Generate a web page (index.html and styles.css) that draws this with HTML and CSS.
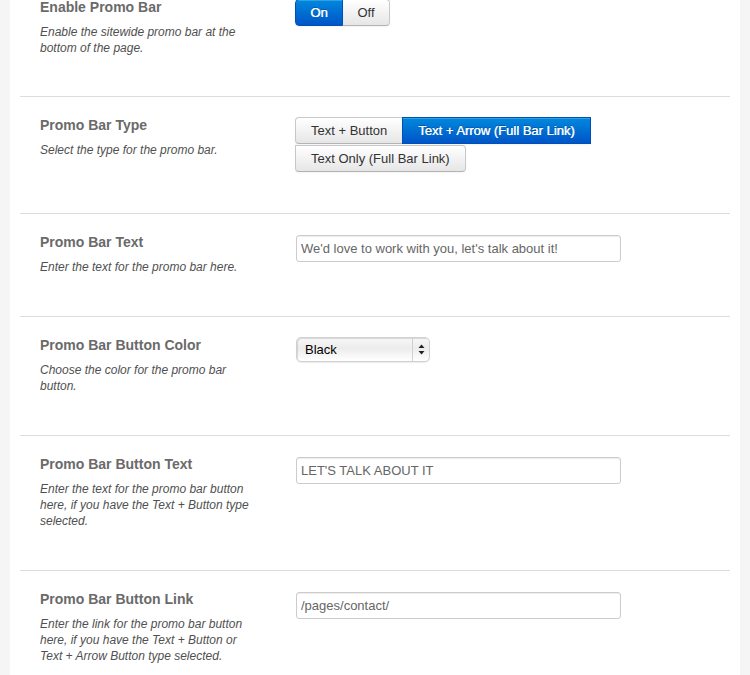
FILE: index.html
```html
<!DOCTYPE html>
<html>
<head>
<meta charset="utf-8">
<link rel="stylesheet" href="styles.css">
</head>
<body>
<div class="panel">
  <div class="row row-first">
    <div class="label-col">
      <h3 class="title">Enable Promo Bar</h3>
      <p class="desc">Enable the sitewide promo bar at the bottom of the page.</p>
    </div>
    <div class="control-col">
      <div class="btn-group">
        <span class="btn btn-toggle btn-primary btn-first">On</span><span class="btn btn-toggle btn-last">Off</span>
      </div>
    </div>
  </div>

  <div class="row">
    <div class="label-col">
      <h3 class="title">Promo Bar Type</h3>
      <p class="desc">Select the type for the promo bar.</p>
    </div>
    <div class="control-col">
      <div class="btn-group">
        <span class="btn btn-wide btn-first">Text + Button</span><span class="btn btn-wide btn-primary">Text + Arrow (Full Bar Link)</span><span class="btn btn-wide btn-last btn-alone">Text Only (Full Bar Link)</span>
      </div>
    </div>
  </div>

  <div class="row">
    <div class="label-col">
      <h3 class="title">Promo Bar Text</h3>
      <p class="desc">Enter the text for the promo bar here.</p>
    </div>
    <div class="control-col">
      <input class="text-input" type="text" value="We'd love to work with you, let's talk about it!">
    </div>
  </div>

  <div class="row">
    <div class="label-col">
      <h3 class="title">Promo Bar Button Color</h3>
      <p class="desc">Choose the color for the promo bar button.</p>
    </div>
    <div class="control-col">
      <div class="select">
        <span class="select-value">Black</span>
        <span class="select-arrows">
          <svg width="7" height="11" viewBox="0 0 7 11"><path d="M3.5 0.5 L6.5 4 L0.5 4 Z" fill="#222"/><path d="M3.5 10.5 L6.5 7 L0.5 7 Z" fill="#222"/></svg>
        </span>
      </div>
    </div>
  </div>

  <div class="row">
    <div class="label-col">
      <h3 class="title">Promo Bar Button Text</h3>
      <p class="desc">Enter the text for the promo bar button here, if you have the Text + Button type selected.</p>
    </div>
    <div class="control-col">
      <input class="text-input" type="text" value="LET'S TALK ABOUT IT">
    </div>
  </div>

  <div class="row">
    <div class="label-col">
      <h3 class="title">Promo Bar Button Link</h3>
      <p class="desc">Enter the link for the promo bar button here, if you have the Text + Button or Text + Arrow Button type selected.</p>
    </div>
    <div class="control-col">
      <input class="text-input" type="text" value="/pages/contact/">
    </div>
  </div>
</div>
</body>
</html>
```

FILE: styles.css
```css
html, body {
  margin: 0;
  padding: 0;
  background: #f5f5f5;
  font-family: "Liberation Sans", Arial, Helvetica, sans-serif;
  overflow: hidden;
}

.panel {
  margin: 0 10px;
  padding: 0 10px;
  background: #ffffff;
  min-height: 100vh;
}

.row {
  display: flex;
  padding: 19px 0 41px 20px;
  border-bottom: 1px solid #dddddd;
}

.row-first {
  margin-top: -21px;
  padding-bottom: 40px;
}

.label-col {
  width: 255px;
  flex: none;
}

.title {
  margin: 0 0 8px 0;
  font-size: 14px;
  line-height: 18px;
  font-weight: bold;
  color: #6a6a6a;
}

.desc {
  margin: 0;
  width: 215px;
  font-size: 12px;
  line-height: 16px;
  font-style: italic;
  color: #505050;
}

.control-col {
  width: 326px;
  flex: none;
  padding-top: 1px;
}

.btn-group {
  display: flex;
  flex-wrap: wrap;
}

.btn {
  display: block;
  padding: 4px 14px;
  font-size: 13px;
  line-height: 17px;
  color: #333333;
  background: linear-gradient(to bottom, #ffffff, #e6e6e6);
  border: 1px solid #c8c8c8;
  border-bottom-color: #b3b3b3;
  box-shadow: inset 0 1px 0 rgba(255,255,255,0.2), 0 1px 2px rgba(0,0,0,0.05);
  margin-left: -1px;
  white-space: nowrap;
}

.btn-wide {
  padding: 4px 15px;
}

.btn-toggle {
  box-sizing: border-box;
  width: 48px;
  padding: 4px 0;
  text-align: center;
}

.btn-first {
  margin-left: 0;
  border-radius: 4px 0 0 4px;
}

.btn-last {
  border-radius: 0 4px 4px 0;
}

.btn-alone {
  margin-left: 0;
  margin-top: 1px;
  border-radius: 0 4px 4px 4px;
}

.btn-primary {
  color: #ffffff;
  text-shadow: 0 -1px 0 rgba(0,0,0,0.25), 0.3px 0 0 #ffffff;
  background: linear-gradient(to bottom, #0088dd, #0055c8);
  border-color: #0050b8;
  position: relative;
}

.text-input {
  display: block;
  box-sizing: border-box;
  width: 325px;
  height: 27px;
  margin: 1px 0 0 1px;
  padding: 4px 4px;
  font-family: "Liberation Sans", Arial, Helvetica, sans-serif;
  font-size: 13px;
  line-height: 17px;
  color: #666666;
  background: #ffffff;
  border: 1px solid #cccccc;
  border-radius: 3px;
  box-shadow: inset 0 1px 1px rgba(0,0,0,0.075);
  outline: none;
}

.select {
  display: flex;
  box-sizing: border-box;
  width: 134px;
  height: 25px;
  margin-left: 1px;
  border: 1px solid #d0d0d0;
  border-radius: 5px;
  background: linear-gradient(to bottom, #f8f8f8 0%, #ececec 45%, #ffffff 100%);
  box-shadow: inset 1px 1px 1px rgba(0,0,0,0.12), 0 1px 1px rgba(0,0,0,0.08);
}

.select-value {
  flex: 1;
  padding-left: 8px;
  font-size: 13px;
  line-height: 23px;
  color: #000000;
}

.select-arrows {
  width: 16px;
  border-left: 1px solid #d0d0d0;
  display: flex;
  align-items: center;
  justify-content: center;
}

.select-arrows svg {
  display: block;
}
```
